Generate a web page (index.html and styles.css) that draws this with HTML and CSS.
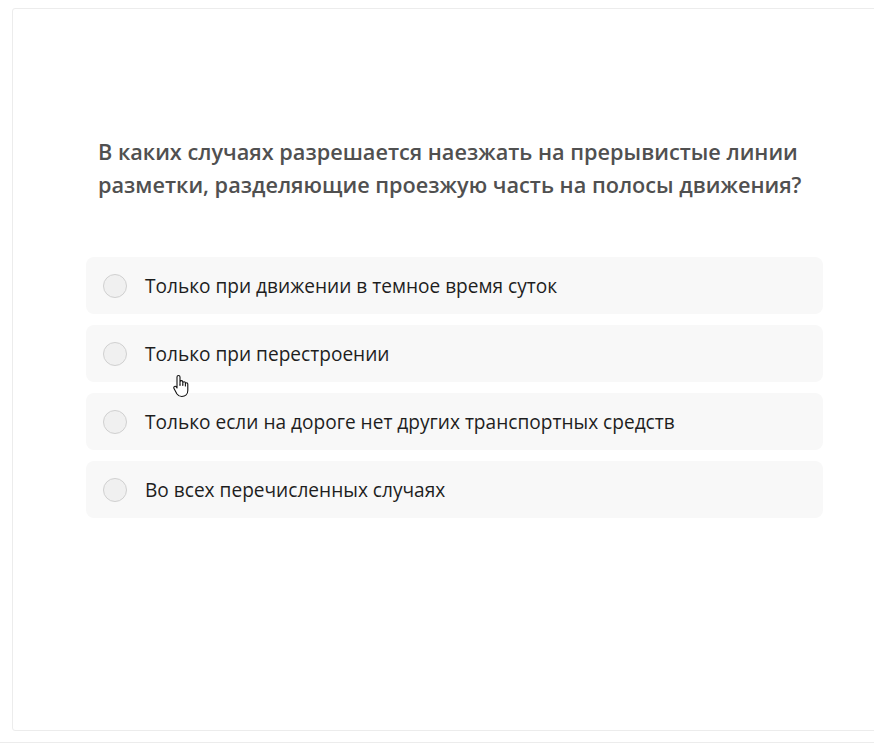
FILE: index.html
```html
<!DOCTYPE html>
<html lang="ru">
<head>
<meta charset="utf-8">
<link rel="stylesheet" href="styles.css">
</head>
<body>
<div class="page">
  <div class="card">
    <div class="question">В каких случаях разрешается наезжать на прерывистые линии разметки, разделяющие проезжую часть на полосы движения?</div>
    <div class="options">
      <label class="option"><span class="radio"></span><span class="text">Только при движении в темное время суток</span></label>
      <label class="option"><span class="radio"></span><span class="text">Только при перестроении</span></label>
      <label class="option"><span class="radio"></span><span class="text">Только если на дороге нет других транспортных средств</span></label>
      <label class="option"><span class="radio"></span><span class="text">Во всех перечисленных случаях</span></label>
    </div>
  </div>
  <div class="footer-line"></div>
  <svg class="cursor" width="18" height="24" viewBox="0 0 18 24">
    <path d="M5.5 1.5c.8 0 1.5.7 1.5 1.5v7.5V8c0-.8.7-1.4 1.4-1.4s1.4.6 1.4 1.4v2.5V9c0-.8.6-1.3 1.3-1.3s1.3.5 1.3 1.3v2V10c0-.7.6-1.2 1.2-1.2s1.2.5 1.2 1.2v6.5c0 3.6-2.6 6-6 6-2.4 0-3.8-1-5-2.8L1 14.5c-.5-.8-.2-1.7.5-2 .7-.4 1.5-.1 2 .6L4 14V3c0-.8.7-1.5 1.5-1.5z" fill="#fff" stroke="#111" stroke-width="1.1" stroke-linejoin="round"/>
    <path d="M7 10.5V12M9.8 10.5V12M12.4 11V12.5" stroke="#111" stroke-width="1" fill="none"/>
  </svg>
</div>
</body>
</html>
```
FILE: styles.css
```css
html, body {
  margin: 0;
  padding: 0;
  background: #fff;
  overflow: hidden;
}
.page {
  position: relative;
  width: 874px;
  height: 744px;
  overflow: hidden;
  font-family: "Open Sans", "Noto Sans", sans-serif;
}
.card {
  box-sizing: border-box;
  margin: 8px 0 0 12px;
  width: 900px;
  height: 723px;
  border: 1px solid #ececec;
  border-radius: 3px;
  padding: 126px 0 0 85px;
}
.question {
  width: 740px;
  font-size: 21.7px;
  font-weight: 600;
  line-height: 33px;
  color: #505050;
}
.options {
  margin: 56px 0 0 -12px;
  width: 737px;
  display: flex;
  flex-direction: column;
  gap: 11px;
}
.option {
  display: flex;
  align-items: center;
  height: 57px;
  background: #f8f8f8;
  border-radius: 8px;
  padding-left: 17px;
  gap: 18px;
}
.radio {
  width: 22px;
  height: 22px;
  border-radius: 50%;
  border: 1px solid #d0d0d0;
  background: #f0f0f0;
  flex: none;
}
.text {
  font-size: 19.1px;
  color: #1e1e1e;
}
.footer-line {
  margin-top: 11px;
  height: 1px;
  background: #ececec;
}
.cursor {
  position: absolute;
  left: 173px;
  top: 374px;
}
```
